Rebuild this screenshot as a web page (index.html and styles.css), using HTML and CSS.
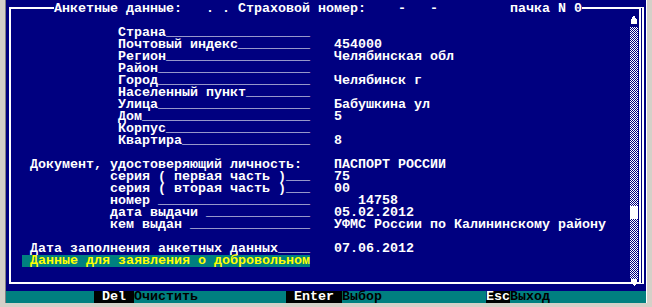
FILE: index.html
```html
<!DOCTYPE html>
<html lang="ru">
<head>
    <meta charset="UTF-8">
    <title>Анкетные данные</title>
    <link rel="stylesheet" href="styles.css">
</head>
<body>

    <div class="screen">
        <div class="panel">
            <div class="frame">
                <div class="title">Анкетные данные:   . . Страховой номер:    -   -         пачка N 0</div>
                <div class="body">
                    <div class="fields">
                        <div class="row"></div>
                        <div class="row"><span class="addr">Страна<span class="line">__________________</span></span><span></span></div>
                        <div class="row"><span class="addr">Почтовый индекс<span class="line">_________</span></span><span>454000</span></div>
                        <div class="row"><span class="addr">Регион<span class="line">__________________</span></span><span>Челябинская обл</span></div>
                        <div class="row"><span class="addr">Район<span class="line">___________________</span></span><span></span></div>
                        <div class="row"><span class="addr">Город<span class="line">___________________</span></span><span>Челябинск г</span></div>
                        <div class="row"><span class="addr">Населенный пункт<span class="line">________</span></span><span></span></div>
                        <div class="row"><span class="addr">Улица<span class="line">___________________</span></span><span>Бабушкина ул</span></div>
                        <div class="row"><span class="addr">Дом<span class="line">_____________________</span></span><span>5</span></div>
                        <div class="row"><span class="addr">Корпус<span class="line">__________________</span></span><span></span></div>
                        <div class="row"><span class="addr">Квартира<span class="line">________________</span></span><span>8</span></div>
                        <div class="row"></div>
                        <div class="row"><span class="head">Документ, удостоверяющий личность:</span><span>ПАСПОРТ РОССИИ</span></div>
                        <div class="row"><span class="doc">серия ( первая часть )<span class="line">___</span></span><span>75</span></div>
                        <div class="row"><span class="doc">серия ( вторая часть )<span class="line">___</span></span><span>00</span></div>
                        <div class="row"><span class="doc">номер <span class="line">___________________</span></span><span>   14758</span></div>
                        <div class="row"><span class="doc">дата выдачи <span class="line">_____________</span></span><span>05.02.2012</span></div>
                        <div class="row"><span class="doc">кем выдан <span class="line">_______________</span></span><span>УФМС России по Калининскому району</span></div>
                        <div class="row"></div>
                        <div class="row"><span class="head">Дата заполнения анкетных данных<span class="line">____</span></span><span>07.06.2012</span></div>
                        <div class="row"><span class="pick"><span class="selected"> Данные для заявления о добровольном</span></span><span></span></div>
                        <div class="row"></div>
                    </div>
                    <svg class="scroll" width="8" height="276" viewBox="0 0 8 276" shape-rendering="crispEdges">
                        <defs>
                            <pattern id="hatch" width="2" height="2" patternUnits="userSpaceOnUse">
                                <rect width="1" height="1" fill="#fff"/>
                                <rect x="1" y="1" width="1" height="1" fill="#fff"/>
                            </pattern>
                        </defs>
                        <path d="M4 0 L7 5 L1 5 Z" fill="#fff"/>
                        <rect x="1" y="5" width="6" height="4" fill="#fff"/>
                        <rect x="0" y="12" width="8" height="252" fill="url(#hatch)"/>
                        <rect x="0" y="191" width="8" height="13" fill="#fff"/>
                        <rect x="1" y="264" width="6" height="3" fill="#fff"/>
                        <path d="M0 267 L8 267 L4 271 Z" fill="#fff"/>
                    </svg>
                </div>
            </div>
        </div>
        <div class="keys">           <span class="key"> Del </span>Очистить           <span class="key"> Enter </span>Выбор             <span class="key">Esc</span>Выход</div>
    </div>

</body>
</html>
```

FILE: styles.css
```css
body {
    margin: 0;
    background-color: #d4d0c8;
    font-family: "Liberation Mono", "DejaVu Sans Mono", monospace;
    font-size: 13.333px;
    font-weight: bold;
}
.screen {
    width: 640px;
    margin-left: 5px;
    padding-top: 3px;
    border-left: 1px solid #808080;
    border-right: 1px solid #ffffff;
    background-color: #000080;
    color: #ffffff;
    line-height: 12px;
}
.panel {
    display: flex;
    align-items: flex-start;
    height: 288px;
}
.frame {
    box-sizing: border-box;
    width: 635px;
    height: 277px;
    margin: 4px 0 0 3px;
    padding-left: 3px;
    border: 2px solid #ffffff;
    border-right: 5px double #ffffff;
}
.title {
    width: fit-content;
    height: 12px;
    margin: -6px 0 0 40px;
    background-color: #000080;
    white-space: pre;
}
.body {
    display: flex;
    align-items: flex-start;
}
.fields {
    flex: 1;
}
.row {
    display: grid;
    grid-template-columns: 320px 1fr;
    height: 12px;
    white-space: pre;
}
.line {
    line-height: 0;
    vertical-align: 1px;
}
.addr {
    padding-left: 104px;
}
.doc {
    padding-left: 96px;
}
.head {
    padding-left: 16px;
}
.pick {
    padding-left: 8px;
}
.selected {
    display: inline-block;
    height: 12px;
    background-color: #008080;
    color: #ffff00;
}
.scroll {
    display: block;
    flex: none;
    margin-right: 1px;
}
.keys {
    height: 12px;
    background-color: #008080;
    color: #000000;
    white-space: pre;
}
.key {
    display: inline-block;
    height: 12px;
    background-color: #000000;
    color: #ffffff;
}
```
